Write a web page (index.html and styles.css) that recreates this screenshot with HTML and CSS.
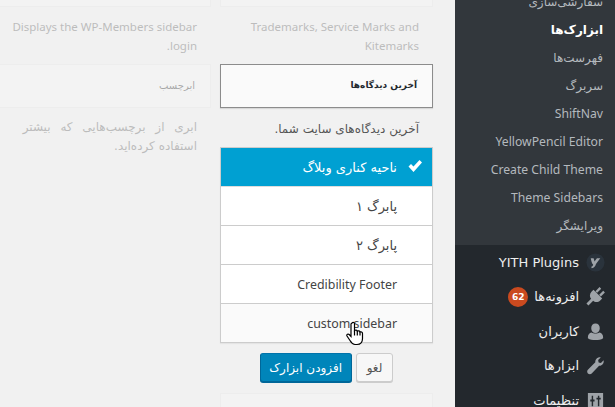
FILE: index.html
```html
<!DOCTYPE html>
<html lang="fa">
<head>
    <meta charset="utf-8">
    <title>ابزارک‌ها</title>
    <link rel="stylesheet" href="styles.css">
</head>
<body>
<div class="page">
    <div class="content">
        <div class="column faded">
            <div class="card card-stub"></div>
            <p class="desc latin">Displays the WP-Members sidebar<br>login.</p>
            <div class="card card-title card-plain">ابرچسب</div>
            <p class="desc"><span class="wide">ابری از برچسب‌هایی که بیشتر</span><br>استفاده کرده‌اید.</p>
        </div>
        <div class="column">
            <div class="faded">
                <div class="card card-stub"></div>
                <p class="desc latin">Trademarks, Service Marks and<br>Kitemarks</p>
            </div>
            <div class="card card-title card-open">آخرین دیدگاه‌ها</div>
            <p class="desc desc-open">آخرین دیدگاه‌های سایت شما.</p>
            <ul class="chooser">
                <li class="selected">
                    <svg class="check" viewBox="0 0 16 14"><path d="M1.5 7.5 L4 5 L6.5 7.5 L12.5 1 L15 3.5 L6.5 13 Z"/></svg>
                    ناحیه کناری وبلاگ
                </li>
                <li>پابرگ ۱</li>
                <li>پابرگ ۲</li>
                <li class="latin">Credibility Footer</li>
                <li class="latin hover">custom sidebar</li>
            </ul>
            <div class="actions">
                <button class="btn btn-primary">افزودن ابزارک</button>
                <button class="btn">لغو</button>
            </div>
            <div class="card card-next faded"></div>
            <svg class="cursor" viewBox="0 0 18 24">
                <path d="M6 1.5 C7 .5 8.5 1 8.5 2.5 V9 C9.5 8.3 11 8.5 11.3 9.6 C12.3 9 13.7 9.3 14 10.5 C15 10 16.5 10.6 16.5 12 V17 C16.5 20.5 14.5 23 11 23 H9 C6.5 23 5.5 21.5 4 19 L1 14.5 C.3 13.2 2 11.8 3.2 13 L5 15 V2.8 C5 2.3 5.5 1.8 6 1.5 Z"/>
                <path class="lines" d="M8.5 9 V14 M11.3 9.6 V14 M14 10.5 V14"/>
            </svg>
        </div>
    </div>
    <nav class="sidebar">
        <ul class="submenu">
            <li>سفارشی‌سازی</li>
            <li class="current">ابزارک‌ها</li>
            <li>فهرست‌ها</li>
            <li>سربرگ</li>
            <li class="latin">ShiftNav</li>
            <li class="latin">YellowPencil Editor</li>
            <li class="latin">Create Child Theme</li>
            <li class="latin">Theme Sidebars</li>
            <li>ویرایشگر</li>
        </ul>
        <ul class="menu">
            <li>
                <svg class="icon" viewBox="0 0 20 20"><circle cx="10" cy="10" r="9.5" fill="#2a333c"/><path d="M5 5.5 H8 L9 9 L11.5 5.5 H15 L10.5 11.5 C10 14 8.5 15.5 6 16 L5.5 14.5 C7 14 7.5 13 7.5 12 C6 11 5.5 8 5 5.5 Z"/></svg>
                <span>YITH Plugins</span>
            </li>
            <li>
                <svg class="icon" viewBox="0 0 20 20"><g transform="rotate(45 10 10)"><path d="M6 0 H8.5 V6 H6 Z M11.5 0 H14 V6 H11.5 Z M3.5 6.5 H16.5 V9.5 C16.5 12.5 14 15 11.5 15 V22 H8.5 V15 C6 15 3.5 12.5 3.5 9.5 Z"/></g></svg>
                <span>افزونه‌ها</span>
                <b class="badge">62</b>
            </li>
            <li>
                <svg class="icon" viewBox="0 0 20 20"><path d="M10 1.5 C12.8 1.5 14.5 3.5 14.5 6.5 C14.5 9.5 12.5 11.5 10 11.5 C7.5 11.5 5.5 9.5 5.5 6.5 C5.5 3.5 7.2 1.5 10 1.5 Z M6 11 C7.5 12.5 12.5 12.5 14 11 C16.8 11.5 18 13.5 18 16 V17 C16 18.5 13 19 10 19 C7 19 4 18.5 2 17 V16 C2 13.5 3.2 11.5 6 11 Z"/></svg>
                <span>کاربران</span>
            </li>
            <li>
                <svg class="icon" viewBox="0 0 20 20"><path d="M18.5 4.5 C19.3 7.5 17 10.5 13.8 10.3 L6 18.5 C4.8 19.5 3 19.3 2 18.3 C1 17.2 1 15.5 2 14.5 L9.8 6.5 C9.5 3.5 12.5 .8 15.5 1.5 L12.8 4.3 L13.3 6.8 L15.7 7.3 Z"/></svg>
                <span>ابزارها</span>
            </li>
            <li>
                <svg class="icon" viewBox="0 0 20 20"><path fill-rule="evenodd" d="M2 2 H18 V18 H2 Z M6 5 V9 H4.5 V11 H6 V16 H7.5 V11 H9 V9 H7.5 V5 Z M12.5 5 V7 H11 V9 H12.5 V16 H14 V9 H15.5 V7 H14 V5 Z"/></svg>
                <span>تنظیمات</span>
            </li>
        </ul>
    </nav>
</div>
</body>
</html>
```

FILE: styles.css
```css
html, body { margin: 0; padding: 0; }
body { background: #f1f1f1; font-family: "DejaVu Sans", sans-serif; font-size: 12px; color: #444; }
ul { list-style: none; margin: 0; padding: 0; }
.latin { font-family: "Noto Sans", "DejaVu Sans", sans-serif; font-size: 12.2px; }

.page { display: flex; width: 615px; height: 407px; overflow: hidden; }
.content { display: flex; gap: 9px; width: 433px; margin-left: -9px; margin-top: -37px; }
.sidebar { width: 160px; margin-left: 31px; background: #23282d; margin-top: -12px; }

.column { position: relative; width: 220px; flex: none; }
.column:last-child { width: 213px; }
.faded { opacity: .3; }

.card { box-sizing: border-box; background: #fafafa; border: 1px solid #e5e5e5; direction: rtl; }
.card-stub { height: 44px; }
.card-title { height: 44px; line-height: 41px; padding-right: 15px; font-size: 9px; font-weight: bold; color: #23282d; }
.card-plain { font-weight: normal; font-size: 10px; color: #000; }
.card-open { border-color: #8c8c8c; box-shadow: 0 1px 1px rgba(0,0,0,.1); }
.card-next { height: 20px; margin-top: 11px; }

.desc { margin: 0; height: 57px; box-sizing: border-box; padding: 10px 14px 0 0; line-height: 19px; text-align: right; direction: rtl; }
.desc.latin { font-size: 11.5px; }
.desc .wide { word-spacing: 6px; }
.desc-open { height: 39px; padding-top: 12px; color: #555; }

.chooser { background: #fff; border: 1px solid #ccc; direction: rtl; box-shadow: 0 1px 1px rgba(0,0,0,.05); }
.chooser li { display: flex; align-items: center; height: 38px; padding-right: 35px; border-bottom: 1px solid #ccc; font-size: 13px; }
.chooser .latin { font-size: 12.4px; }
.chooser li:last-child { border-bottom: 0; }
.chooser .selected { position: relative; background: #00a0d2; color: #fff; border-bottom: 1px solid #ddd; }
.chooser .hover { background: #fafafa; }
.check { position: absolute; right: 9px; top: 11px; width: 16px; height: 14px; fill: #fff; }

.actions { display: flex; justify-content: center; gap: 4px; margin-top: 10px; }
.btn { box-sizing: border-box; height: 29px; padding: 0 10px; border: 1px solid #ccc; border-radius: 3px; background: #f7f7f7; box-shadow: 0 1px 0 #ccc; color: #555; font-family: inherit; font-size: 12px; }
.btn-primary { width: 92px; padding: 0; border-color: #0073aa #006799 #006799; background: #0085ba; box-shadow: 0 1px 0 #006799; color: #fff; }

.cursor { position: absolute; left: 126px; top: 358px; width: 18px; height: 25px; fill: #fff; stroke: #000; stroke-width: 1.2; }
.cursor .lines { fill: none; }

.submenu { background: #32373c; padding: 0 0 5px; }
.submenu li { height: 28px; line-height: 28px; padding-right: 12px; text-align: right; direction: rtl; color: #b4b9be; }
.submenu .current { color: #fff; font-weight: bold; }

.menu li { display: flex; flex-direction: row-reverse; align-items: center; height: 34.5px; padding-right: 10px; color: #eee; font-size: 13px; }
.icon { width: 19px; height: 19px; margin-left: 7px; fill: #9ea3a8; flex: none; }
.badge { margin-right: 6px; width: 20px; height: 20px; line-height: 20px; border-radius: 50%; background: #ca4a1f; color: #fff; font-size: 9px; text-align: center; }
```
